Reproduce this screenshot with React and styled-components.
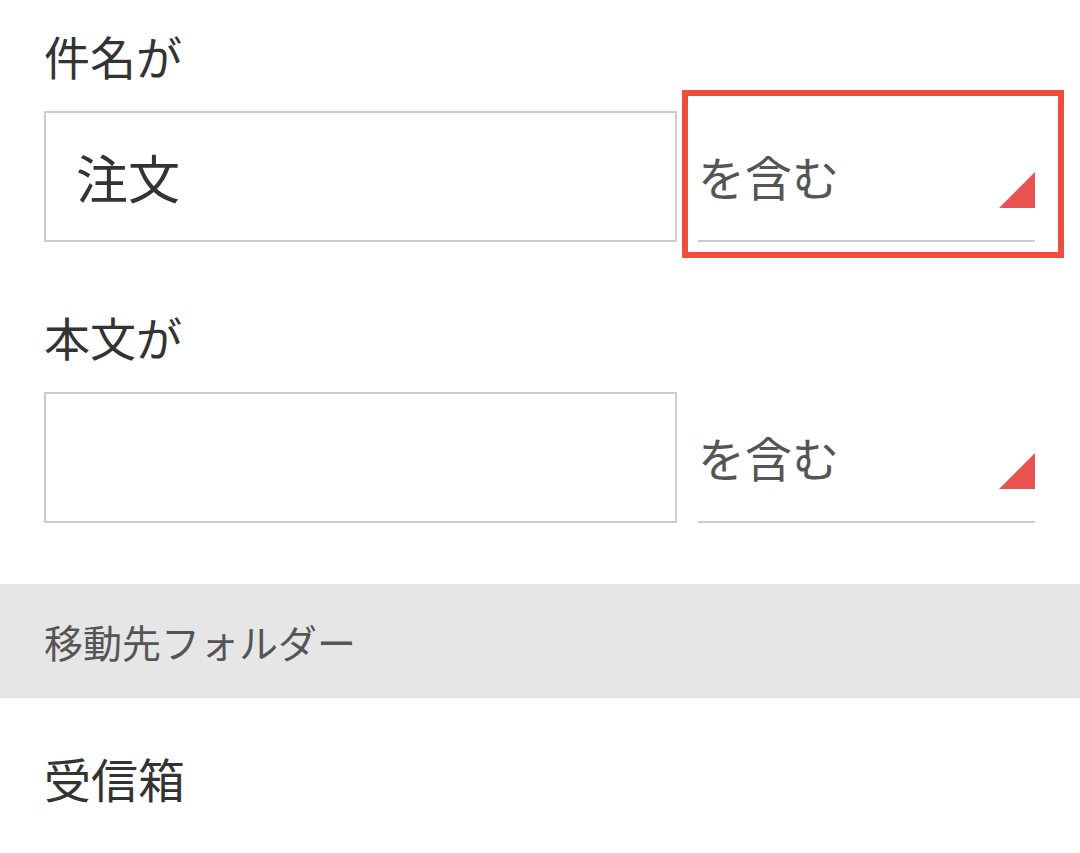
import React from "react";
import styled, { createGlobalStyle } from "styled-components";

const GlobalStyle = createGlobalStyle`
  html, body {
    margin: 0;
    padding: 0;
    background: #ffffff;
  }
  body {
    font-family: "Noto Sans CJK JP", "Noto Sans", sans-serif;
    color: #333333;
  }
`;

const Page = styled.div`
  width: 1080px;
  height: 853px;
  overflow: hidden;
  background: #ffffff;
`;

const Section = styled.div`
  padding: ${(p) => p.$top}px 45px 0 44px;
`;

const Label = styled.div`
  font-size: 46px;
  line-height: 56px;
  color: #333333;
  margin: 0 0 28px 0;
`;

const Row = styled.div`
  display: flex;
  gap: 21px;
`;

const TextBox = styled.div`
  box-sizing: border-box;
  width: 633px;
  height: 131px;
  border: 2px solid #cccccc;
  display: flex;
  align-items: center;
  padding-left: 30px;
  font-size: 52px;
  color: #333333;
`;

const Select = styled.div`
  position: relative;
  box-sizing: border-box;
  flex: 1;
  height: 131px;
  border-bottom: 2px solid #cccccc;
  display: flex;
  align-items: center;
  font-size: 47px;
  color: #555555;

  ${(p) =>
    p.$focused &&
    `
    &::after {
      content: "";
      position: absolute;
      left: -16px;
      right: -29px;
      top: -21px;
      bottom: -18px;
      border: 6px solid #f44c3c;
      pointer-events: none;
    }
  `}
`;

const SelectText = styled.span`
  flex: 1;
`;

const Caret = styled.svg`
  width: 36px;
  height: 36px;
  margin-top: 29px;
  flex: none;
`;

const Band = styled.div`
  margin-top: 61px;
  height: 114px;
  background: #e6e6e6;
  display: flex;
  align-items: center;
  padding-left: 44px;
  font-size: 39px;
  color: #555555;
`;

const Item = styled.div`
  padding: 52px 44px 0;
  font-size: 47px;
  line-height: 56px;
  color: #333333;
`;

const SelectField = ({ value, focused }) => (
  <Select $focused={focused}>
    <SelectText>{value}</SelectText>
    <Caret viewBox="0 0 36 36">
      <polygon points="36,0 36,36 0,36" fill="#e8524f" />
    </Caret>
  </Select>
);

const App = () => (
  <Page>
    <GlobalStyle />
    <Section $top={27}>
      <Label>件名が</Label>
      <Row>
        <TextBox>注文</TextBox>
        <SelectField value="を含む" focused />
      </Row>
    </Section>
    <Section $top={66}>
      <Label>本文が</Label>
      <Row>
        <TextBox />
        <SelectField value="を含む" />
      </Row>
    </Section>
    <Band>移動先フォルダー</Band>
    <Item>受信箱</Item>
  </Page>
);

export default App;
